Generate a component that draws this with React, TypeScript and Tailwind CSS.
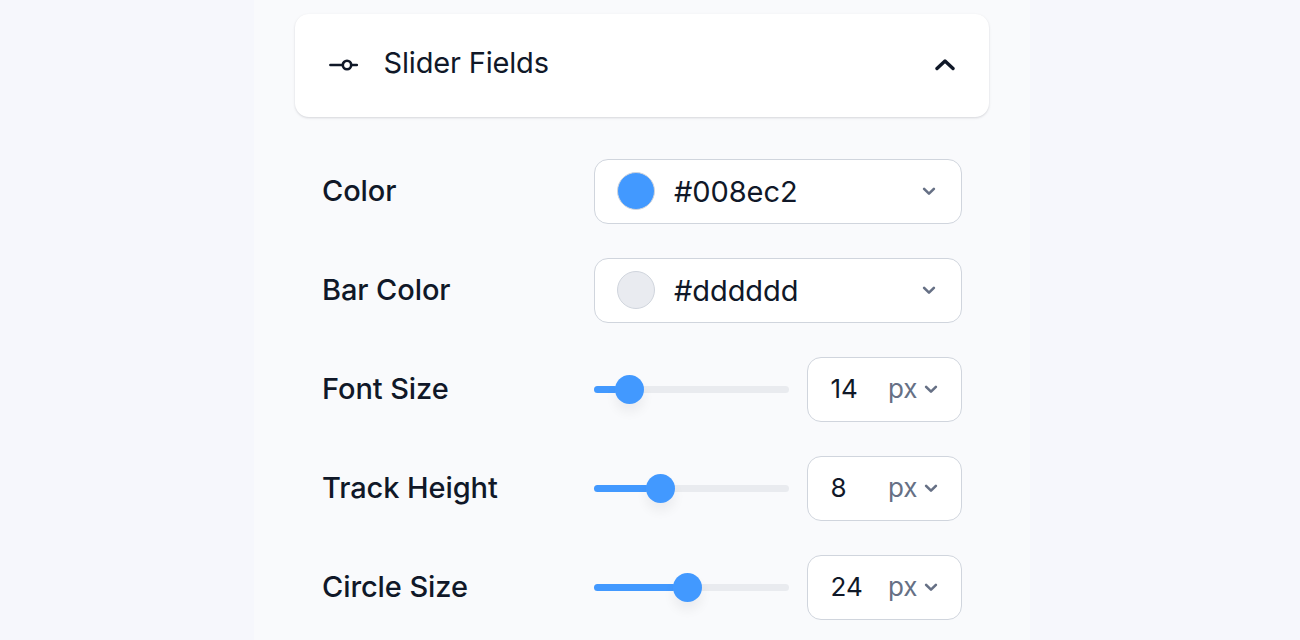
import React from 'react';

type ColorFieldProps = {
  label: string;
  value: string;
  swatch: string;
};

type SliderFieldProps = {
  label: string;
  value: number;
  fill: number; // width of the filled part of the track, up to the thumb center
};

const colorFields: ColorFieldProps[] = [
  { label: 'Color', value: '#008ec2', swatch: 'bg-[#4299ff]' },
  { label: 'Bar Color', value: '#dddddd', swatch: 'bg-[#e9ebf0]' },
];

const sliderFields: SliderFieldProps[] = [
  { label: 'Font Size', value: 14, fill: 35.7 },
  { label: 'Track Height', value: 8, fill: 66.5 },
  { label: 'Circle Size', value: 24, fill: 93.5 },
];

const ChevronDown = () => (
  <svg className="mb-px h-[10px] w-[14px] shrink-0 text-[#667085]" viewBox="0 0 14 10" fill="none">
    <path d="M2.1 2.8 7 7.7 11.9 2.8" stroke="currentColor" strokeWidth="2.6" strokeLinecap="round" strokeLinejoin="round" />
  </svg>
);

const FieldRow: React.FC<{ label: string; children: React.ReactNode }> = ({ label, children }) => (
  <div className="flex h-[65px] items-center">
    <span className="w-[272px] shrink-0 pb-[2px] text-[29px] leading-9 font-medium tracking-[-0.09px] whitespace-nowrap">{label}</span>
    {children}
  </div>
);

const ColorField: React.FC<ColorFieldProps> = ({ label, value, swatch }) => (
  <FieldRow label={label}>
    <div className="flex h-[65px] w-[368px] items-center rounded-[14px] border border-[#d0d5dd] bg-white pr-[25px] pl-[22px]">
      <span className={`mb-px h-[38px] w-[38px] rounded-full border border-[#d0d5dd] ${swatch}`} />
      <span className="ml-[19px] grow text-[29px] leading-9 tracking-[-0.08px]">{value}</span>
      <ChevronDown />
    </div>
  </FieldRow>
);

const SliderField: React.FC<SliderFieldProps> = ({ label, value, fill }) => (
  <FieldRow label={label}>
    <div className="relative h-[7px] w-[195px] rounded-full bg-[#e9ebef]">
      <div className="h-full rounded-full bg-[#4299ff]" style={{ width: fill - 12 }} />
      <div
        className="absolute top-[-11px] -ml-[14.5px] h-[29px] w-[29px] rounded-full bg-[#4299ff] shadow-[0_8px_12px_rgba(16,24,40,0.06)]"
        style={{ left: fill }}
      />
    </div>
    <div className="ml-[18px] flex h-[65px] w-[155px] items-center rounded-[14px] border border-[#d0d5dd] bg-white pr-[23px] pl-[22.5px]">
      <span className="w-[57.5px] pb-px text-[26px] leading-8">{value}</span>
      <span className="grow pb-px text-[26px] leading-8 tracking-[-0.1px] text-[#667085]">px</span>
      <ChevronDown />
    </div>
  </FieldRow>
);

export default function App() {
  return (
    <div className="h-[640px] overflow-hidden bg-[#f6f7fc] pl-[254px] font-['Inter',sans-serif] text-[#101828]">
      <main className="h-full w-[776px] bg-[#f9fafc] pt-[14px] pl-[41px]">
        <header className="flex h-[103px] w-[694px] items-center rounded-[14px] bg-white pr-[34px] pl-[34px] shadow-[0_1px_3px_rgba(16,24,40,0.1),0_1px_2px_rgba(16,24,40,0.06)]">
          <svg className="mb-[2px] h-[12px] w-[30px]" viewBox="0 0 30 12" fill="none" stroke="currentColor" strokeWidth="2.6" strokeLinecap="round">
            <path d="M1.4 6H13M23 6H27.8" />
            <circle cx="18" cy="6" r="4.2" />
          </svg>
          <h2 className="ml-[24.5px] grow pb-[6px] text-[29px] leading-9 font-normal tracking-[-0.17px]">Slider Fields</h2>
          <svg className="mb-[2px] h-[14px] w-[20px]" viewBox="0 0 20 14" fill="none">
            <path d="M2 10.5 10 3 18 10.5" stroke="currentColor" strokeWidth="3.4" strokeLinecap="round" strokeLinejoin="round" />
          </svg>
        </header>

        <section className="mt-[42px] ml-[27px] flex flex-col gap-[34px]">
          {colorFields.map((field) => (
            <ColorField key={field.label} {...field} />
          ))}
          {sliderFields.map((field) => (
            <SliderField key={field.label} {...field} />
          ))}
        </section>
      </main>
    </div>
  );
}
